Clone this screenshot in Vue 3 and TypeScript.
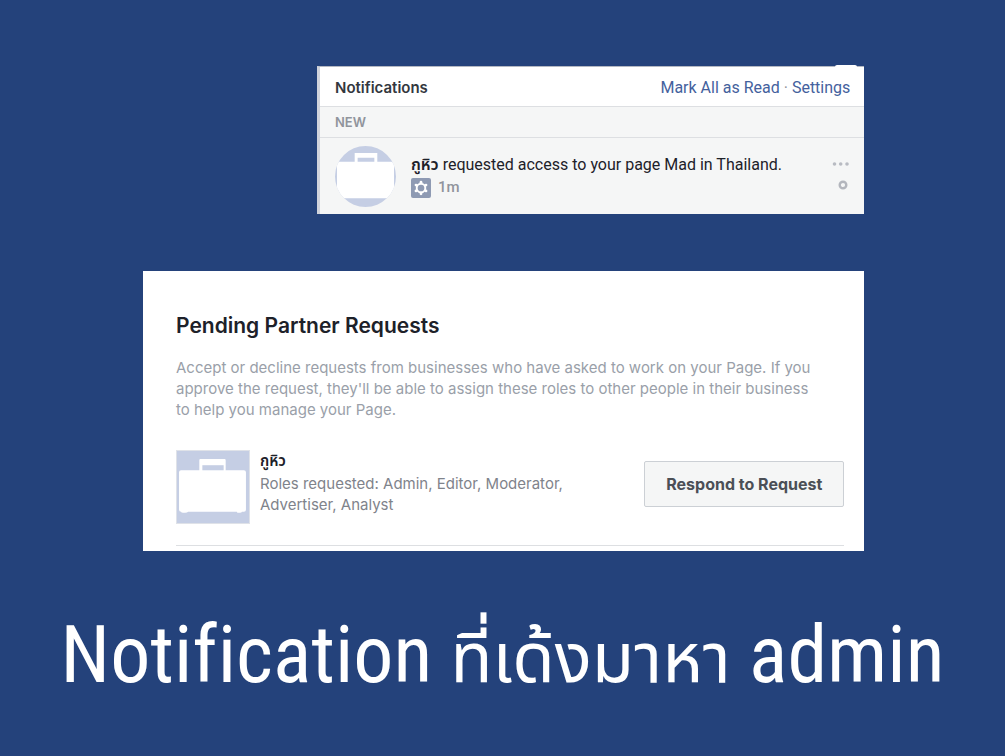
<script setup lang="ts">
interface PartnerRequest {
  name: string
  page: string
  age: string
  roles: string[]
}

const request: PartnerRequest = {
  name: 'กูหิว',
  page: 'Mad in Thailand',
  age: '1m',
  roles: ['Admin', 'Editor', 'Moderator', 'Advertiser', 'Analyst'],
}
</script>

<template>
  <main class="slide">
    <section class="notifications" aria-label="Notifications">
      <span class="pointer" aria-hidden="true"></span>
      <header class="bar">
        <h2>Notifications</h2>
        <nav><a href="#read">Mark All as Read</a><span class="dot"> · </span><a href="#settings">Settings</a></nav>
      </header>
      <h3 class="group">NEW</h3>
      <article class="item">
        <svg class="avatar" viewBox="0 0 62 62" aria-hidden="true">
          <defs><clipPath id="round"><circle cx="31" cy="31" r="31" /></clipPath></defs>
          <g clip-path="url(#round)">
            <path fill="#c5cee4" d="M0 0h62v62H0z" />
            <path fill="#fff" d="M4 16H20V7H43V16H57Q60 16 60 19V49Q60 53 56 53H6Q2 53 2 49V19Q2 16 4 16Z" />
            <path fill="#c5cee4" d="M23 12h17v4H23z" />
          </g>
        </svg>
        <div class="message">
          <p><b>{{ request.name }}</b> requested access to your page {{ request.page }}.</p>
          <div class="meta">
            <svg viewBox="0 0 20 20" aria-hidden="true">
              <rect width="20" height="20" rx="2" fill="#8e9ab3" />
              <circle cx="10" cy="10" r="4.3" fill="none" stroke="#fff" stroke-width="1.9" />
              <g fill="#fff"><circle cx="10" cy="4.2" r="1.4" /><circle cx="15" cy="7.1" r="1.4" /><circle cx="15" cy="12.9" r="1.4" /><circle cx="10" cy="15.8" r="1.4" /><circle cx="5" cy="12.9" r="1.4" /><circle cx="5" cy="7.1" r="1.4" /></g>
            </svg>
            <span>{{ request.age }}</span>
          </div>
        </div>
        <div class="actions">
          <button type="button" aria-label="Options">
            <svg width="18" height="6" viewBox="0 0 18 6"><g fill="#b8bbc2"><circle cx="2.5" cy="3" r="1.8" /><circle cx="8.7" cy="3" r="1.8" /><circle cx="15" cy="3" r="1.8" /></g></svg>
          </button>
          <button type="button" class="unread" aria-label="Mark as read">
            <svg width="10" height="10" viewBox="0 0 10 10"><circle cx="5" cy="5" r="3.3" fill="none" stroke="#b3b6bd" stroke-width="2.4" /></svg>
          </button>
        </div>
      </article>
    </section>

    <section class="requests">
      <h2>Pending Partner Requests</h2>
      <p class="intro">Accept or decline requests from businesses who have asked to work on your Page. If you approve the request, they'll be able to assign these roles to other people in their business to help you manage your Page.</p>
      <div class="partner">
        <svg class="logo" viewBox="0 0 73 73" aria-hidden="true">
          <path fill="#c5cee4" stroke="#dfe2e8" d="M.5.5h72v72H.5z" />
          <path fill="#fff" d="M5 20H23V10Q23 9 24 9H48Q49 9 49 10V20H67Q69 20 69 22V59Q69 61 67 61H65Q65 62 63 62H61Q60 62 60 61H12Q11 62 9 62H7Q5 62 5 61Q3 61 3 59V22Q3 20 5 20Z" />
          <path fill="#c5cee4" d="M26 15h21v5H26z" />
        </svg>
        <div class="details">
          <b>{{ request.name }}</b>
          <p>Roles requested: {{ request.roles.join(', ') }}</p>
        </div>
        <button type="button" class="respond">Respond to Request</button>
      </div>
    </section>

    <h1>Notification <span lang="th">ที่เด้งมาหา</span> admin</h1>
  </main>
</template>

<style>
body {
  margin: 0;
  background: #24427b;
}
</style>

<style scoped>
.slide {
  box-sizing: border-box;
  min-height: 100vh;
  padding-top: 66px;
  background: #24427b;
  font-family: Roboto, "Noto Sans Thai", "Noto Sans", sans-serif;
  font-size: 16px;
  line-height: 21px;
  color: #1d2129;
}

h1, h2, h3, p {
  margin: 0;
}

b {
  font-weight: 600;
}

button {
  font: inherit;
  cursor: pointer;
}

a {
  color: #44619d;
  text-decoration: none;
}

.notifications, .requests {
  box-sizing: border-box;
  margin-right: 14%;
}

.notifications {
  position: relative;
  margin-left: 317px;
  border-top: 1px solid #b4b8c2;
  border-left: 3px solid #d0d3dc;
  background: #f5f6f6;
}

.pointer {
  position: absolute;
  top: -2px;
  right: 7px;
  width: 22px;
  height: 3px;
  border-radius: 2px 2px 0 0;
  background: #fff;
}

.bar {
  display: flex;
  justify-content: space-between;
  align-items: center;
  height: 38px;
  padding: 1px 14px 0 15px;
  border-bottom: 1px solid #dddfe2;
  background: #fff;
}

.bar h2 {
  font-family: Inter, sans-serif;
  font-size: 15px;
  font-weight: 600;
  color: #33373e;
}

.dot {
  color: #90949c;
}

.group {
  padding: 5px 15px 4px;
  border-bottom: 1px solid #dddfe2;
  color: #90949c;
  font-family: Inter, sans-serif;
  font-size: 13px;
  font-weight: 600;
}

.item {
  display: flex;
  gap: 15px;
  padding: 8px 14px 7px 15px;
}

.avatar {
  flex: none;
  width: 61px;
  height: 61px;
}

.message {
  flex: 1;
  padding-top: 8px;
}

.meta {
  display: flex;
  align-items: center;
  gap: 7px;
  padding-top: 2px;
  color: #90949c;
  font-size: 15px;
  font-weight: 500;
}

.meta svg {
  width: 20px;
  height: 20px;
}

.actions {
  display: flex;
  flex-direction: column;
  align-items: flex-end;
  gap: 13px;
  padding-top: 15px;
}

.actions button {
  display: flex;
  padding: 0;
  border: 0;
  background: none;
}

.actions .unread {
  padding-right: 2px;
}

.requests {
  margin-top: 57px;
  margin-left: 143px;
  padding: 42px 20px 5px 33px;
  background: #fff;
  font-family: Inter, "Noto Sans Thai", "Noto Sans", sans-serif;
  font-size: 15px;
}

.requests h2 {
  font-size: 21px;
  font-weight: 600;
  line-height: 26px;
}

.intro {
  max-width: 640px;
  padding-top: 18px;
  color: #9a9fa9;
}

.partner {
  display: flex;
  align-items: flex-start;
  gap: 10px;
  margin-top: 30px;
  padding-bottom: 21px;
  border-bottom: 1px solid #dddfe2;
}

.logo {
  flex: none;
  width: 74px;
  height: 74px;
}

.details {
  flex: 1;
  color: #7f838b;
}

.details b {
  display: block;
  padding-bottom: 2px;
  color: #1d2129;
}

.details p {
  max-width: 330px;
}

.respond {
  width: 200px;
  height: 46px;
  margin-top: 11px;
  padding: 0;
  border: 1px solid #ccd0d5;
  border-radius: 2px;
  background: #f5f6f6;
  color: #4b4f56;
  font-size: 16px;
  font-weight: 700;
}

h1 {
  margin-top: 48px;
  color: #fff;
  font-family: "Roboto Condensed", Roboto, "Noto Sans Thai", sans-serif;
  font-size: 80px;
  font-variant-ligatures: none;
  font-weight: 400;
  line-height: 112px;
  text-align: center;
  white-space: nowrap;
}

h1 span {
  font-size: 69px;
}
</style>
